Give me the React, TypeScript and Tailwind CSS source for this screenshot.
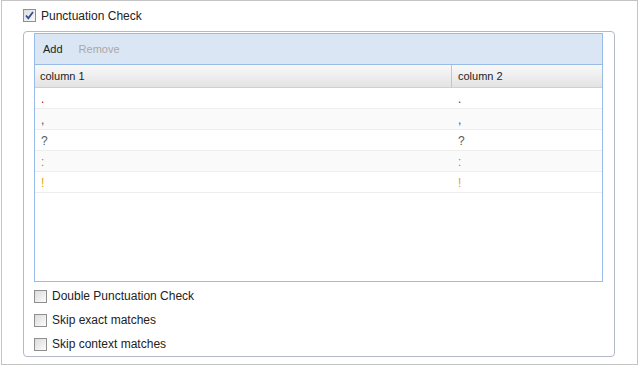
import React from "react";

const rows = [
  { v: ".", color: "text-[#b00000]" },
  { v: ",", color: "text-[#3a4a80]" },
  { v: "?", color: "text-[#555b66]" },
  { v: ":", color: "text-[#b8860b]" },
  { v: "!", color: "text-[#e0a810]" },
];

function Box({ checked }: { checked?: boolean }) {
  return (
    <span className="relative inline-flex h-[13px] w-[13px] shrink-0 items-center justify-center border border-[#8f8f8f] bg-gradient-to-br from-[#dcdcdc] to-[#fbfbfb]">
      {checked && (
        <svg viewBox="0 0 11 11" className="h-[11px] w-[11px]">
          <path d="M2 5.5 L4.3 8.2 L9 2" fill="none" stroke="#2f4f9a" strokeWidth="1.8" />
        </svg>
      )}
    </span>
  );
}

export default function App() {
  return (
    <div className="h-[366px] w-[639px] bg-white font-['Liberation_Sans',Arial,sans-serif] text-[12px] text-[#222]">
      <div className="ml-px h-[365px] w-[637px] border border-[#c4c4c4] bg-white">
        <label className="ml-[21px] mt-[8px] flex h-[13px] items-center gap-[5px]">
          <Box checked />
          <span>Punctuation Check</span>
        </label>

        <div className="ml-[21px] mt-[9px] h-[326px] w-[592px] rounded-[4px] border border-[#b5b8c8]">
          <div className="ml-[10px] mt-px h-[249px] w-[569px] border border-[#99bbe8] bg-white text-[11px]">
            <div className="flex h-[31px] items-center gap-[16px] border-b border-[#99bbe8] bg-[#dae6f4] pl-[8px] pt-[1px]">
              <span className="text-[#222]">Add</span>
              <span className="text-[#a9a9a9]">Remove</span>
            </div>
            <div className="flex h-[23px] border-b border-[#d0d0d0] bg-gradient-to-b from-[#f9f9f9] to-[#e3e3e3]">
              <div className="flex w-[417px] items-center border-r border-[#c5c5c5] pl-[5px]">column 1</div>
              <div className="flex flex-1 items-center pl-[6px]">column 2</div>
            </div>
            {rows.map((r, i) => (
              <div
                key={i}
                className={`flex h-[21px] items-center border-b border-[#ededed] pt-[2px] text-[12px] ${r.color} ${i % 2 ? "bg-[#fafafa]" : "bg-white"}`}
              >
                <div className="w-[418px] pl-[6px]">{r.v}</div>
                <div className="flex-1 pl-[5px]">{r.v}</div>
              </div>
            ))}
          </div>

          <div className="ml-[10px] mt-[7px] flex flex-col gap-[10px]">
            <label className="flex h-[14px] items-center gap-[5px]">
              <Box />
              <span>Double Punctuation Check</span>
            </label>
            <label className="flex h-[14px] items-center gap-[5px]">
              <Box />
              <span>Skip exact matches</span>
            </label>
            <label className="flex h-[14px] items-center gap-[5px]">
              <Box />
              <span>Skip context matches</span>
            </label>
          </div>
        </div>
      </div>
    </div>
  );
}
